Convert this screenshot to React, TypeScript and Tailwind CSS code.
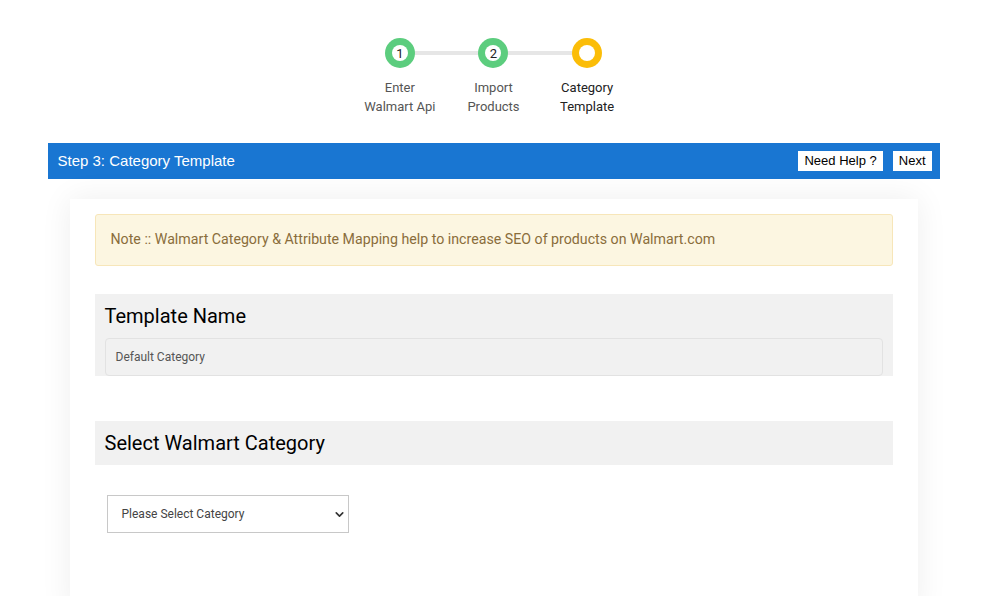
import { ChevronDown } from 'lucide-react'

const steps = [
  { n: '1', label: ['Enter', 'Walmart Api'], done: true },
  { n: '2', label: ['Import', 'Products'], done: true },
  { n: '', label: ['Category', 'Template'], done: false },
]

export default function App() {
  return (
    <div className="min-h-[596px] bg-white font-['Roboto',sans-serif] overflow-hidden">
      {/* STEPPER */}
      <div className="pt-[38px] flex justify-center">
        <div className="relative grid grid-cols-3 w-[281px]">
          <div className="absolute left-[47px] right-[47px] top-[13px] h-[4px] bg-[#e6e6e6]" />
          {steps.map((s, i) => (
            <Step key={i} {...s} />
          ))}
        </div>
      </div>

      {/* BAR */}
      <div className="mt-[27px] mx-auto w-[892px] h-[36px] bg-[#1976d2] flex items-center justify-between pl-[10px] pr-[8px] font-['Liberation_Sans',Arial,sans-serif]">
        <span className="text-white text-[15px]">Step 3: Category Template</span>
        <div className="flex gap-[10px]">
          <button className="bg-white text-black text-[13px] h-[20px] px-[6px] leading-[20px]">Need Help ?</button>
          <button className="bg-white text-black text-[13px] h-[20px] px-[6px] leading-[20px]">Next</button>
        </div>
      </div>

      {/* CARD */}
      <div className="mt-[20px] mx-auto w-[848px] bg-white shadow-[0_0_30px_rgba(0,0,0,0.07)] px-[25px] pt-[15px] pb-[80px]">
        <div className="h-[52px] bg-[#fcf6e1] border border-[#f7e6b9] rounded-[3px] flex items-center px-[15px] text-[14.2px] text-[#8a6d3b]">
          Note :: Walmart Category &amp; Attribute Mapping help to increase SEO of products on Walmart.com
        </div>

        <div className="mt-[28px] bg-[#f1f1f1] px-[10px] pt-[9px]">
          <h2 className="text-[20px] leading-[26px] text-black">Template Name</h2>
          <div className="mt-[9px] h-[38px] border border-[#e2e2e2] rounded-[4px] flex items-center px-[10px] text-[12px] text-[#555]">
            Default Category
          </div>
        </div>

        <div className="mt-[45px] h-[44px] bg-[#f1f1f1] px-[10px] flex items-center">
          <h2 className="text-[20px] text-black">Select Walmart Category</h2>
        </div>

        <div className="mt-[30px] ml-[12px] w-[242px] h-[38px] border border-[#c8c8c8] flex items-center justify-between pl-[14px] pr-[2px] text-[12px] text-[#444]">
          <span>Please Select Category</span>
          <ChevronDown size={13} strokeWidth={3} className="text-[#333]" />
        </div>
      </div>
    </div>
  )
}

function Step({ n, label, done }: any) {
  return (
    <div className="relative flex flex-col items-center">
      <div
        className={
          done
            ? 'w-[30px] h-[30px] rounded-full bg-[#5ccd7e] flex items-center justify-center'
            : 'w-[30px] h-[30px] rounded-full bg-[#fbbd08] flex items-center justify-center'
        }
      >
        <div className="w-[16px] h-[16px] rounded-full bg-white flex items-center justify-center text-[13px] leading-none text-[#222]">
          {n}
        </div>
      </div>
      <div className={done ? 'mt-[10px] text-center text-[13px] leading-[19px] text-[#555]' : 'mt-[10px] text-center text-[13px] leading-[19px] text-[#222]'}>
        {label[0]}
        <br />
        {label[1]}
      </div>
    </div>
  )
}
